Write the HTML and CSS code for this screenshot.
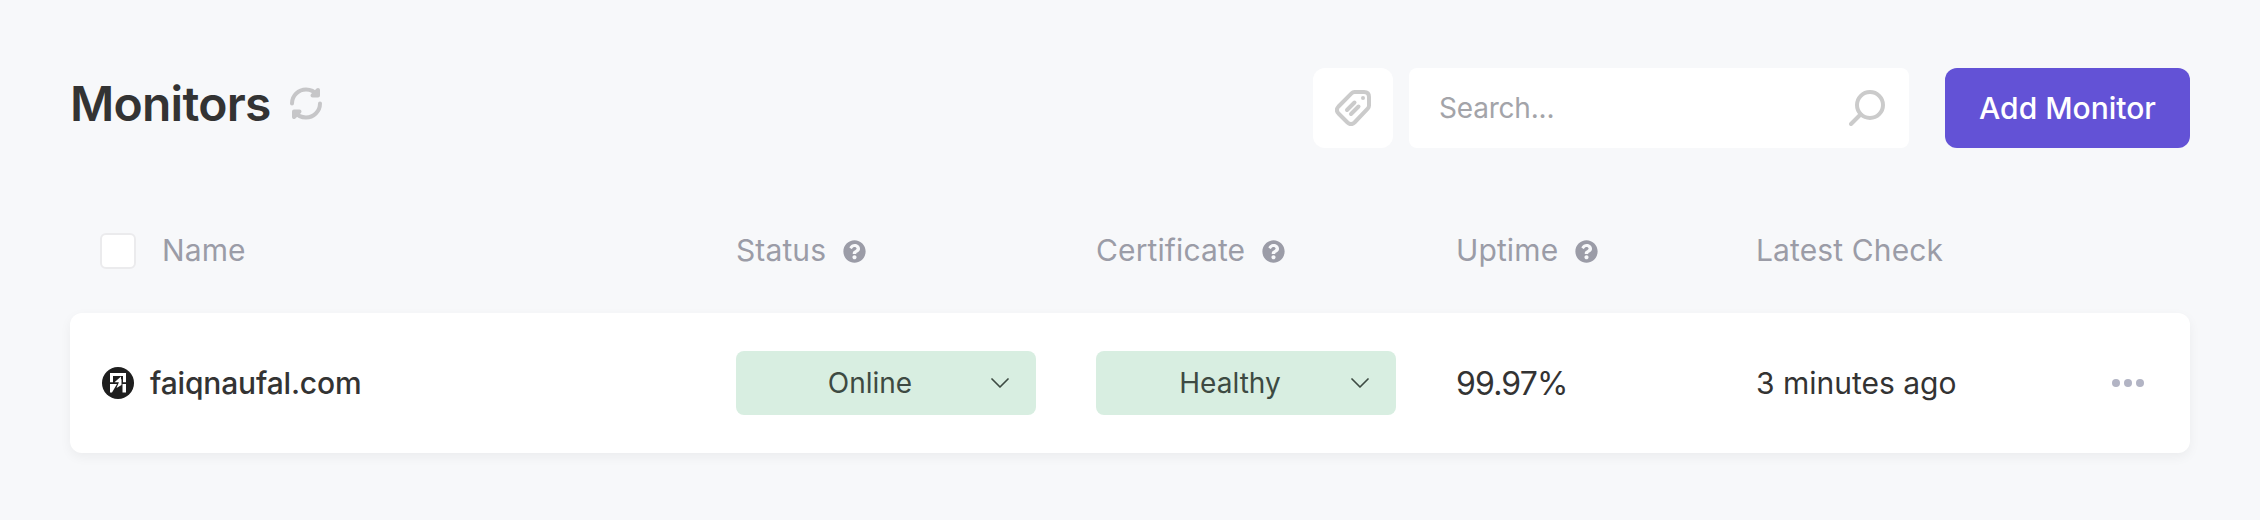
FILE: index.html
```html
<!DOCTYPE html>
<html lang="en">
<head>
<meta charset="utf-8">
<title>Monitors</title>
<link rel="stylesheet" href="styles.css">
</head>
<body>
<main class="page">
  <header class="toolbar">
    <div class="heading">
      <h1 class="title">Monitors</h1>
      <svg class="refresh" viewBox="0 0 32 33" fill="none" stroke="#c6c6c8" stroke-width="4" stroke-linecap="round" stroke-linejoin="round">
        <path d="M2 16.500C2 8.500 8.500 2.500 16 2.500C20.500 2.500 24.500 4.500 27 8M30 16.500C30 24.500 23.500 30.500 16 30.500C11.500 30.500 7.500 28.500 5 25"/>
        <path d="M28 3V8.500H22.500ZM4 30V24.500H9.500Z" fill="#c6c6c8"/>
      </svg>
    </div>
    <div class="actions">
      <button class="tag-button" aria-label="Tags">
        <svg class="icon" viewBox="0 0 36 36" fill="none" stroke="#cbcbcb" stroke-width="4" stroke-linecap="round" stroke-linejoin="round">
          <path d="M19.500 2H29Q34 2 34 7V15.500Q34 17.300 32.700 18.600L19.500 32.500Q16 35.700 12.500 32.500L3.500 23.500Q.3 20 3.500 16.500L16.500 3.300Q17.800 2 19.500 2Z"/>
          <path d="M12 20L19.500 12.500M16 24L23.500 16.500"/>
          <circle cx="28" cy="8" r="2" fill="#cbcbcb" stroke="none"/>
        </svg>
      </button>
      <div class="search">
        <span class="placeholder">Search...</span>
        <svg class="icon" viewBox="0 0 36 36" fill="none" stroke="#cbcbcb" stroke-width="4" stroke-linecap="round">
          <circle cx="21" cy="15" r="13"/>
          <path d="M11.500 24.500L2 34"/>
        </svg>
      </div>
      <button class="add">Add Monitor</button>
    </div>
  </header>

  <div class="row head">
    <div class="name-head"><span class="checkbox"></span><span class="label">Name</span></div>
    <div class="cell"><span class="label">Status</span><svg class="help" viewBox="0 0 512 512"><path fill="#9b9ca7" d="M504 256c0 137-111 248-248 248S8 393 8 256 119 8 256 8s248 111 248 248zM262.700 90c-54.500 0-89.300 23-116.500 63.800-3.500 5.300-2.400 12.400 2.700 16.300l34.700 26.300c5.200 3.900 12.600 3 16.700-2.100 17.900-22.700 30.100-35.800 57.300-35.800 20.400 0 45.700 13.100 45.700 33 0 15-12.400 22.700-32.500 34C247.100 238.500 216 254.900 216 296v4c0 6.600 5.400 12 12 12h56c6.600 0 12-5.400 12-12v-1.300c0-28.500 83.200-29.600 83.200-106.700 0-58-60.200-102-116.500-102zM256 338c-25.400 0-46 20.600-46 46s20.600 46 46 46 46-20.600 46-46-20.600-46-46-46z"/></svg></div>
    <div class="cell"><span class="label">Certificate</span><svg class="help" viewBox="0 0 512 512"><path fill="#9b9ca7" d="M504 256c0 137-111 248-248 248S8 393 8 256 119 8 256 8s248 111 248 248zM262.700 90c-54.500 0-89.300 23-116.500 63.800-3.500 5.300-2.400 12.400 2.700 16.300l34.700 26.300c5.200 3.900 12.600 3 16.700-2.100 17.900-22.700 30.100-35.800 57.300-35.800 20.400 0 45.700 13.100 45.700 33 0 15-12.400 22.700-32.500 34C247.100 238.500 216 254.900 216 296v4c0 6.600 5.400 12 12 12h56c6.600 0 12-5.400 12-12v-1.300c0-28.500 83.200-29.600 83.200-106.700 0-58-60.200-102-116.500-102zM256 338c-25.400 0-46 20.600-46 46s20.600 46 46 46 46-20.600 46-46-20.600-46-46-46z"/></svg></div>
    <div class="cell"><span class="label">Uptime</span><svg class="help" viewBox="0 0 512 512"><path fill="#9b9ca7" d="M504 256c0 137-111 248-248 248S8 393 8 256 119 8 256 8s248 111 248 248zM262.700 90c-54.500 0-89.300 23-116.500 63.800-3.500 5.300-2.400 12.400 2.700 16.300l34.700 26.300c5.200 3.900 12.600 3 16.700-2.100 17.900-22.700 30.100-35.800 57.300-35.800 20.400 0 45.700 13.100 45.700 33 0 15-12.400 22.700-32.500 34C247.100 238.500 216 254.900 216 296v4c0 6.600 5.400 12 12 12h56c6.600 0 12-5.400 12-12v-1.300c0-28.500 83.200-29.600 83.200-106.700 0-58-60.200-102-116.500-102zM256 338c-25.400 0-46 20.600-46 46s20.600 46 46 46 46-20.600 46-46-20.600-46-46-46z"/></svg></div>
    <div class="cell"><span class="label">Latest Check</span></div>
  </div>

  <div class="row card">
    <div class="site">
      <svg class="favicon" viewBox="0 0 32 32">
        <circle cx="16" cy="16" r="16" fill="#1e1e1e"/>
        <path fill="#fff" d="M8 6H24V15.300H21V9H11V15.300H8ZM19 9.500V15.300H12.500ZM8 17H15L10 25.500H8ZM19.500 12V18L14.500 21L17 15ZM20.500 17H24V25.500H20.500Z"/>
      </svg>
      <span class="site-name">faiqnaufal.com</span>
    </div>
    <div class="pill"><span class="pill-label">Online</span><svg class="chevron" viewBox="0 0 18 10" fill="none" stroke="#3d4a42" stroke-width="1.700" stroke-linecap="round" stroke-linejoin="round"><path d="M1 1L9 9L17 1"/></svg></div>
    <div class="pill"><span class="pill-label">Healthy</span><svg class="chevron" viewBox="0 0 18 10" fill="none" stroke="#3d4a42" stroke-width="1.700" stroke-linecap="round" stroke-linejoin="round"><path d="M1 1L9 9L17 1"/></svg></div>
    <div class="uptime">99.97%</div>
    <div class="checked">3 minutes ago</div>
    <svg class="more" viewBox="0 0 32 8" fill="#b2b4c4"><circle cx="4" cy="4" r="4"/><circle cx="16" cy="4" r="4"/><circle cx="28" cy="4" r="4"/></svg>
  </div>
</main>
</body>
</html>
```
FILE: styles.css
```css
* { box-sizing: border-box; }
body {
  margin: 0;
  background: #f7f8fa;
  color: #333;
  font-family: Inter, "Liberation Sans", sans-serif;
  font-size: 30px;
}
svg { display: block; flex: none; }
button { border: 0; padding: 0; font: inherit; }
.page { height: 520px; padding: 68px 70px 0; }
.toolbar { display: flex; justify-content: space-between; height: 80px; }
.heading { display: flex; align-items: center; height: 71px; }
.title { width: 220px; margin: 0; font-size: 48px; font-weight: 600; line-height: 60px; letter-spacing: -.75px; white-space: nowrap; }
.refresh { width: 32px; height: 33px; }
.actions { display: flex; }
.tag-button { display: flex; align-items: center; justify-content: center; width: 80px; height: 80px; margin-right: 16px; border-radius: 12px; background: #fff; }
.icon { width: 36px; height: 36px; }
.search { display: flex; align-items: center; justify-content: space-between; width: 500px; height: 80px; margin-right: 36px; padding: 0 24px 0 30px; border-radius: 8px; background: #fff; color: #a3a4a9; font-size: 28px; }
.placeholder { letter-spacing: -.2px; }
.add { width: 245px; height: 80px; border-radius: 12px; background: #6352d6; color: #fff; font-weight: 500; }
.row { display: grid; grid-template-columns: 636px 360px 360px 300px 300px 1fr; align-items: center; padding-left: 30px; white-space: nowrap; }
.head { height: 36px; margin-top: 85px; color: #9b9ca7; }
.name-head { display: flex; align-items: center; gap: 26px; }
.label { padding-bottom: 2px; line-height: 34px; letter-spacing: .12px; }
.checkbox { width: 36px; height: 36px; border: 2px solid #ebebed; border-radius: 6px; background: #fff; }
.cell { display: flex; align-items: center; gap: 17px; }
.help { width: 23px; height: 23px; }
.card { height: 140px; margin-top: 44px; border-radius: 12px; background: #fff; box-shadow: 0 4px 12px rgba(0, 0, 0, .05); }
.site { display: flex; align-items: center; gap: 16px; padding-left: 2px; }
.favicon { width: 32px; height: 32px; }
.site-name { font-weight: 500; letter-spacing: -.17px; }
.pill { display: grid; grid-template-columns: 1fr 18px; align-items: center; width: 300px; height: 64px; padding-right: 27px; border-radius: 8px; background: #d8eee1; color: #3d4a42; font-size: 28px; text-align: center; }
.pill-label { padding-left: 13px; }
.chevron { width: 18px; height: 10px; }
.uptime { font-size: 32px; letter-spacing: -.85px; }
.more { width: 32px; height: 8px; margin-left: 56px; }
```
